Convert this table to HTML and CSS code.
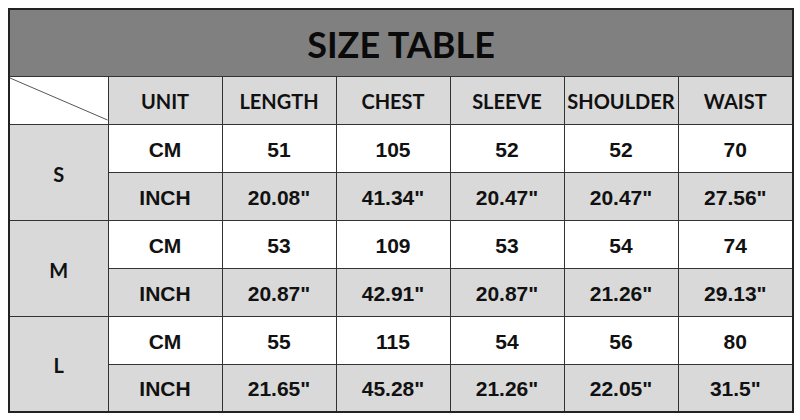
FILE: index.html
```html
<!DOCTYPE html>
<html>
<head>
<meta charset="utf-8">
<link rel="stylesheet" href="styles.css">
</head>
<body>
<table class="size-table">
  <colgroup>
    <col class="c-size"><col class="c"><col class="c"><col class="c"><col class="c"><col class="c"><col class="c-last">
  </colgroup>
  <tr class="title-row"><th colspan="7" class="title">SIZE TABLE</th></tr>
  <tr class="head-row">
    <th class="diag"><svg class="diag-line" viewBox="0 0 98 47" preserveAspectRatio="none"><line x1="0" y1="1" x2="98" y2="43" stroke="#555" stroke-width="1"/></svg></th>
    <th>UNIT</th><th>LENGTH</th><th>CHEST</th><th>SLEEVE</th><th>SHOULDER</th><th>WAIST</th>
  </tr>
  <tr class="cm"><th rowspan="2" class="size">S</th><td>CM</td><td>51</td><td>105</td><td>52</td><td>52</td><td>70</td></tr>
  <tr class="inch"><td>INCH</td><td>20.08"</td><td>41.34"</td><td>20.47"</td><td>20.47"</td><td>27.56"</td></tr>
  <tr class="cm"><th rowspan="2" class="size">M</th><td>CM</td><td>53</td><td>109</td><td>53</td><td>54</td><td>74</td></tr>
  <tr class="inch"><td>INCH</td><td>20.87"</td><td>42.91"</td><td>20.87"</td><td>21.26"</td><td>29.13"</td></tr>
  <tr class="cm"><th rowspan="2" class="size">L</th><td>CM</td><td>55</td><td>115</td><td>54</td><td>56</td><td>80</td></tr>
  <tr class="inch"><td>INCH</td><td>21.65"</td><td>45.28"</td><td>21.26"</td><td>22.05"</td><td>31.5"</td></tr>
</table>
</body>
</html>
```
FILE: styles.css
```css
html, body { margin: 0; padding: 0; background: #fff; }
body { padding: 8px; }
.size-table {
  border-collapse: collapse;
  table-layout: fixed;
  width: 784px;
  border: 2px solid #222;
}
.c-size { width: 99px; }
.c { width: 114px; }
.c-last { width: 115px; }
th, td {
  border: 1px solid #333;
  padding: 0;
  text-align: center;
  vertical-align: middle;
  color: #111;
}
.title-row { height: 67px; }
.title {
  background: #808080;
  font-family: Lato, sans-serif;
  font-weight: 700;
  font-size: 36px;
  color: #0a0a0a;
  padding-top: 2px;
}
.head-row { height: 48px; }
.head-row th {
  background: #d9d9d9;
  font-family: Lato, sans-serif;
  font-weight: 700;
  font-size: 20px;
  padding-top: 2px;
}
.head-row th.diag { background: #fff; position: relative; padding: 0; }
.diag-line { position: absolute; left: 0; top: 0; width: 100%; height: 100%; display: block; }
.cm, .inch { height: 48px; }
.inch td { background: #d9d9d9; }
.cm td { background: #fff; }
td {
  font-family: "Liberation Sans", Arial, sans-serif;
  font-weight: 700;
  font-size: 21px;
  padding-top: 3px;
}
.size {
  background: #d9d9d9;
  font-family: Lato, sans-serif;
  font-weight: 700;
  font-size: 20px;
  padding-top: 3px;
}
```
